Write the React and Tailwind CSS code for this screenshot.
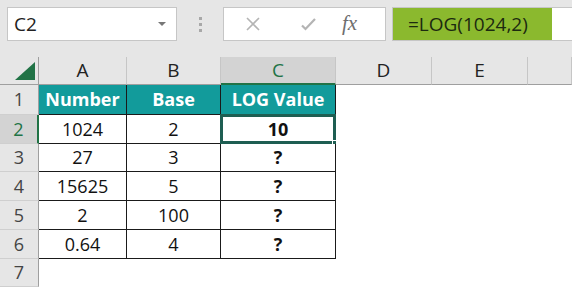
import { Fragment } from "react";

const font = { fontFamily: '"Open Sans", "Liberation Sans", sans-serif' };

const rows = [
  ["1024", "2", "10"],
  ["27", "3", "?"],
  ["15625", "5", "?"],
  ["2", "100", "?"],
  ["0.64", "4", "?"],
];

function ColHead({ label, active }) {
  return (
    <div
      className={
        "flex items-center justify-center border-r border-[#c6c6c6] text-[19px] " +
        (active
          ? "bg-[#d3d3d3] text-[#217346] border-b-2 border-b-[#217346]"
          : "bg-[#e6e6e6] text-[#222] border-b border-b-[#9f9f9f]")
      }
    >
      {label}
    </div>
  );
}

function RowHead({ n, active }) {
  return (
    <div
      className={
        "flex items-center justify-center border-b border-[#cfcfcf] text-[18px] " +
        (active
          ? "bg-[#d3d3d3] text-[#217346] border-r-2 border-r-[#217346]"
          : "bg-[#e6e6e6] text-[#444] border-r border-r-[#9f9f9f]")
      }
    >
      {n}
    </div>
  );
}

export default function App() {
  return (
    <div className="h-[287px] w-[572px] overflow-hidden bg-white" style={font}>
      {/* formula bar */}
      <div className="flex h-[57px] items-start bg-[#e6e6e6] pt-[7px]">
        <div className="ml-[7px] flex h-[34px] w-[170px] items-center justify-between border border-[#c6c6c6] bg-white pl-[6px] pr-[10px]">
          <span className="text-[19px] text-[#222]">C2</span>
          <span className="h-0 w-0 border-x-[4px] border-t-[4px] border-x-transparent border-t-[#777]" />
        </div>
        <div className="flex h-[34px] w-[46px] flex-col items-center justify-center gap-[3px]">
          <span className="h-[3px] w-[3px] bg-[#a8a8a8]" />
          <span className="h-[3px] w-[3px] bg-[#a8a8a8]" />
          <span className="h-[3px] w-[3px] bg-[#a8a8a8]" />
        </div>
        <div className="flex h-[34px] w-[163px] items-center border border-[#c6c6c6] bg-white">
          <svg width="16" height="16" viewBox="0 0 16 16" className="ml-[21px]">
            <path d="M2 2 L14 14 M14 2 L2 14" stroke="#b4b4b4" strokeWidth="1.6" fill="none" />
          </svg>
          <svg width="18" height="14" viewBox="0 0 18 14" className="ml-[38px]">
            <path d="M3 8.5 L6.5 12 L16 2" stroke="#b4b4b4" strokeWidth="2.2" fill="none" />
          </svg>
          <span
            className="ml-[25px] text-[21px] italic text-[#6e6e6e]"
            style={{ fontFamily: '"Liberation Serif", serif' }}
          >
            fx
          </span>
        </div>
        <div className="ml-[6px] flex h-[34px] flex-1 border border-r-0 border-[#c6c6c6] bg-white">
          <div className="flex h-full w-[159px] items-center bg-[#8bb92e] pl-[15px] text-[19px] text-[#1c2a10]">
            =LOG(1024,2)
          </div>
        </div>
      </div>

      {/* grid */}
      <div className="grid grid-cols-[39px_88px_94px_115px_96px_96px_1fr] grid-rows-[28px_30px_29px_28px_29px_29px_29px_1fr]">
        <div className="flex items-end justify-end border-b border-r border-[#9f9f9f] bg-[#e6e6e6] pb-[4px] pr-[3px]">
          <svg width="20" height="18" viewBox="0 0 20 18">
            <path d="M20 0 L20 18 L0 18 Z" fill="#217346" />
          </svg>
        </div>
        <ColHead label="A" />
        <ColHead label="B" />
        <ColHead label="C" active />
        <ColHead label="D" />
        <ColHead label="E" />
        <ColHead label="" />

        <RowHead n="1" />
        {["Number", "Base", "LOG Value"].map((h) => (
          <div
            key={h}
            className="flex items-center justify-center border-b border-r border-[#1a1a1a] bg-[#129b9b] text-[18px] font-bold text-white"
          >
            {h}
          </div>
        ))}
        <div />
        <div />
        <div />

        {rows.map((r, i) => (
          <Fragment key={i}>
            <RowHead n={String(i + 2)} active={i === 0} />
            {r.map((v, j) => (
              <div
                key={j}
                className={
                  "relative flex items-center justify-center border-b border-r border-[#1a1a1a] text-[18px] text-[#111] " +
                  (j === 2 ? "font-bold" : "")
                }
              >
                {v}
                {i === 0 && j === 2 && (
                  <div className="absolute -left-[1px] -top-[1px] h-[30px] w-[116px] border-[3px] border-[#1e5e52]">
                    <span className="absolute -bottom-[4px] -right-[4px] h-[5px] w-[5px] border border-white bg-[#1e5e52]" />
                  </div>
                )}
              </div>
            ))}
            <div />
            <div />
            <div />
          </Fragment>
        ))}

        <RowHead n="7" />
      </div>
    </div>
  );
}
